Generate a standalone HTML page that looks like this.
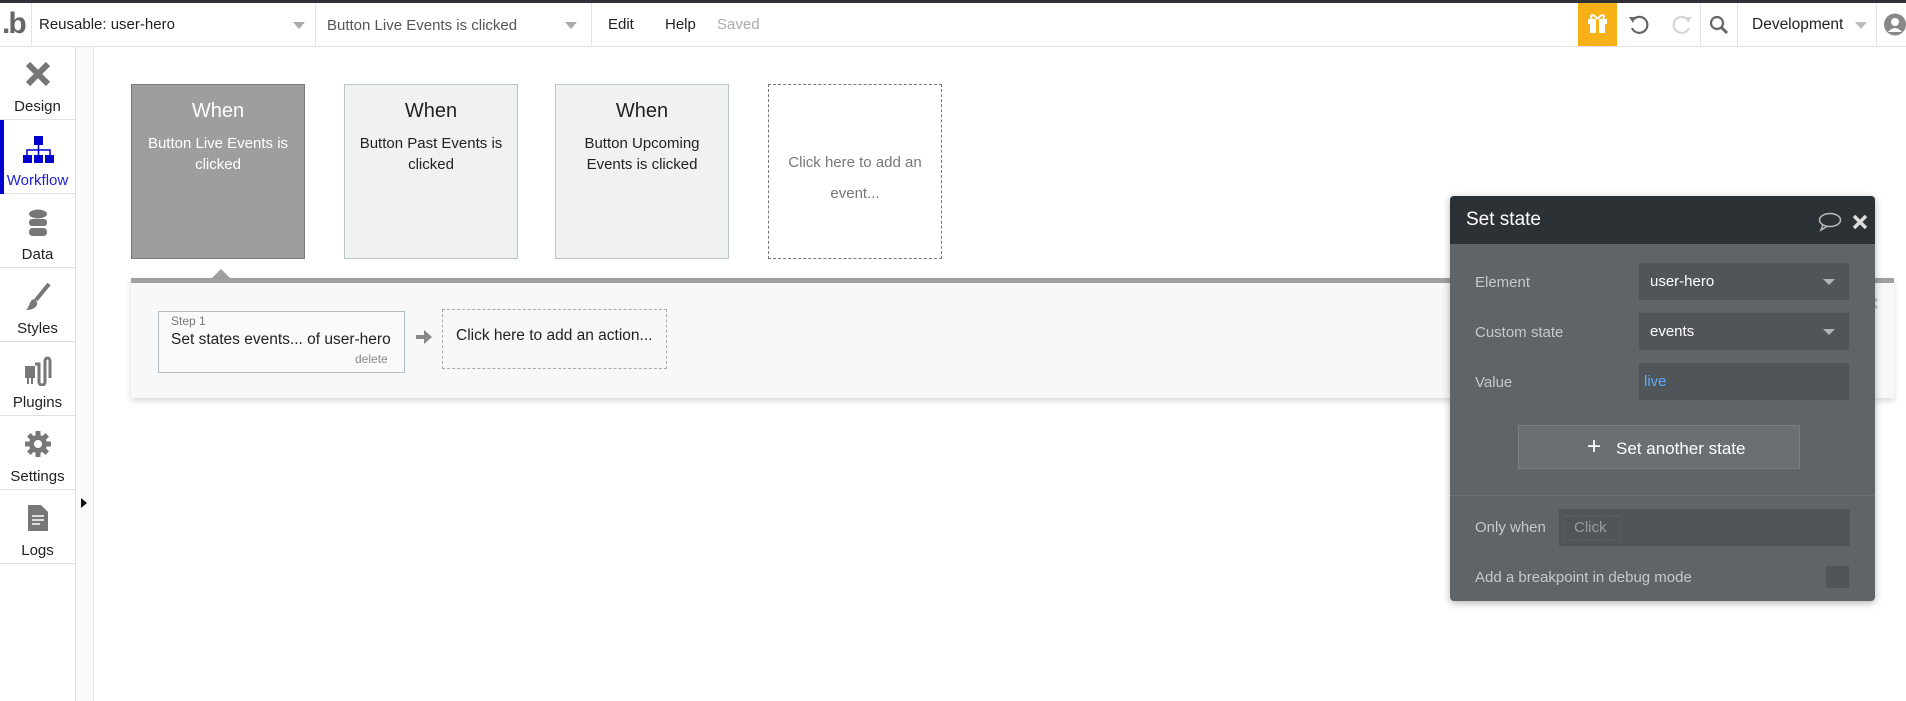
<!DOCTYPE html>
<html><head><meta charset="utf-8"><style>
*{margin:0;padding:0;box-sizing:border-box}
body{width:1906px;height:701px;position:relative;overflow:hidden;background:#fff;font-family:"Liberation Sans",sans-serif;color:#222}
.a{position:absolute}
.t{position:absolute;white-space:nowrap}
.sep{position:absolute;top:3px;width:1px;height:43px;background:#e4e4e4}
.dd{position:absolute;width:0;height:0;border-left:6px solid transparent;border-right:6px solid transparent;border-top:7px solid #aaa}
.side{position:absolute;left:0;width:75px;height:74px;border-bottom:1px solid #e0e0e0;text-align:center}
.side svg{margin-top:2px}
.side .l{position:absolute;left:0;right:0;top:52px;font-size:15px;color:#222}
.card{position:absolute;top:84px;width:174px;height:175px;text-align:center;font-size:15px;line-height:21px}
.card .w{font-size:20px;margin-top:16px;margin-bottom:11px}
.lab{position:absolute;left:1475px;font-size:15px;color:#c5c9cc}
.inp{position:absolute;left:1639px;width:210px;height:37px;background:#50555a;color:#fff;font-size:15px;padding:10px 0 0 11px}
.inp .dd{left:auto;right:14px;top:16px;border-top-color:#b0b4b8;border-left-width:6px;border-right-width:6px;border-top-width:6px}
</style></head><body>
<div class="a" style="left:0;top:0;width:1906px;height:3px;background:#2e3236"></div>
<div class="a" style="left:0;top:46px;width:1906px;height:1px;background:#e2e2e2"></div>
<div class="t" style="left:2px;top:7px;font-size:30px;color:#666;font-weight:bold;letter-spacing:-2px">.b</div>
<div class="sep" style="left:31px"></div>
<div class="t" style="left:39px;top:16px;font-size:15px">Reusable: user-hero</div>
<div class="dd" style="left:293px;top:22px"></div>
<div class="sep" style="left:315px"></div>
<div class="t" style="left:327px;top:17px;font-size:15px;color:#555">Button Live Events is clicked</div>
<div class="dd" style="left:565px;top:22px"></div>
<div class="sep" style="left:591px"></div>
<div class="t" style="left:608px;top:16px;font-size:15px">Edit</div>
<div class="t" style="left:665px;top:16px;font-size:15px">Help</div>
<div class="t" style="left:717px;top:16px;font-size:15px;color:#aaa">Saved</div>
<div class="a" style="left:1578px;top:3px;width:39px;height:43px;background:#f8b017"></div>
<svg class="a" style="left:1585px;top:11px" width="25" height="25" viewBox="0 0 25 25"><rect x="3" y="8" width="19" height="5" fill="#fff"/><rect x="5" y="13" width="15" height="9" fill="#fff"/><rect x="11" y="8" width="3" height="14" fill="#f8b017"/><path d="M12.5 8 C8 2 4 4 7 8 M12.5 8 C17 2 21 4 18 8" stroke="#fff" stroke-width="2" fill="none"/></svg>
<svg class="a" style="left:1628px;top:14px" width="22" height="22" viewBox="0 0 22 22"><path d="M5 6 A8 8 0 1 1 4 14" stroke="#666" stroke-width="2.2" fill="none"/><path d="M1 3 L7 3 L5 9 Z" fill="#666"/></svg>
<svg class="a" style="left:1671px;top:14px" width="22" height="22" viewBox="0 0 22 22"><path d="M17 6 A8 8 0 1 0 18 14" stroke="#d5d5d5" stroke-width="2.2" fill="none"/><path d="M21 3 L15 3 L17 9 Z" fill="#d5d5d5"/></svg>
<div class="sep" style="left:1700px"></div>
<svg class="a" style="left:1708px;top:14px" width="22" height="22" viewBox="0 0 22 22"><circle cx="9" cy="9" r="6" stroke="#666" stroke-width="2.2" fill="none"/><path d="M13 13 L19 19" stroke="#666" stroke-width="3"/></svg>
<div class="sep" style="left:1737px"></div>
<div class="t" style="left:1752px;top:16px;font-size:15.5px">Development</div>
<div class="dd" style="left:1855px;top:22px;border-top-color:#bbb"></div>
<div class="sep" style="left:1876px"></div>
<svg class="a" style="left:1883px;top:13px" width="23" height="23" viewBox="0 0 23 23"><circle cx="12" cy="11.5" r="11" fill="#888"/><circle cx="12" cy="9" r="4" fill="#fff"/><path d="M5 19 Q12 11 19 19" fill="#fff"/></svg>

<div class="a" style="left:75px;top:47px;width:1px;height:654px;background:#e0e0e0"></div>
<div class="a" style="left:76px;top:47px;width:17px;height:654px;background:#fafafa"></div>
<div class="a" style="left:93px;top:47px;width:1px;height:654px;background:#e6e6e6"></div>
<div class="a" style="left:81px;top:498px;width:0;height:0;border-top:5px solid transparent;border-bottom:5px solid transparent;border-left:6px solid #111"></div>

<div class="side" style="top:46px"><svg class="a" style="left:25px;top:12px" width="26" height="28" viewBox="0 0 26 26"><path d="M3 3 L23 23 M23 3 L3 23" stroke="#777" stroke-width="6"/></svg><div class="l">Design</div></div>
<div class="side" style="top:120px"><div class="a" style="left:0;top:0;width:4px;height:74px;background:#0000cc"></div><svg class="a" style="left:23px;top:14px" width="32" height="28" viewBox="0 0 32 28"><rect x="11" y="0" width="9" height="9" fill="#0000cc"/><path d="M15.5 9 V14 M4 19 V14 H27 V19 M15.5 14 V19" stroke="#0000cc" stroke-width="1.5" fill="none"/><rect x="0" y="19" width="9" height="8" fill="#0000cc"/><rect x="11" y="19" width="9" height="8" fill="#0000cc"/><rect x="22" y="19" width="9" height="8" fill="#0000cc"/></svg><div class="l" style="color:#2222dd">Workflow</div></div>
<div class="side" style="top:194px"><svg class="a" style="left:28px;top:13px" width="20" height="28" viewBox="0 0 20 28"><ellipse cx="10" cy="5" rx="9" ry="4.5" fill="#777"/><rect x="1" y="10" width="18" height="7" rx="3" fill="#777"/><rect x="1" y="19" width="18" height="8" rx="3.5" fill="#777"/></svg><div class="l">Data</div></div>
<div class="side" style="top:268px"><svg class="a" style="left:25px;top:13px" width="26" height="28" viewBox="0 0 26 28"><path d="M24 1 L11 17" stroke="#777" stroke-width="4"/><path d="M10 16 C4 16 5 24 1 27 C8 27 13 24 12 19 Z" fill="#777"/></svg><div class="l">Styles</div></div>
<div class="side" style="top:342px"><svg class="a" style="left:23px;top:12px" width="30" height="30" viewBox="0 0 30 30"><rect x="2" y="10" width="10" height="12" fill="#777"/><path d="M5 22 V28 M9 22 V28" stroke="#777" stroke-width="2"/><path d="M12 8 H16 V26 C16 30 22 30 22 26 V5 C22 1 27 1 27 5 V22" stroke="#777" stroke-width="3" fill="none"/></svg><div class="l">Plugins</div></div>
<div class="side" style="top:416px"><svg class="a" style="left:25px;top:13px" width="26" height="26" viewBox="0 0 26 26"><g fill="#777"><circle cx="13" cy="13" r="9"/><rect x="10.5" y="0" width="5" height="26"/><rect x="0" y="10.5" width="26" height="5"/><rect x="10.5" y="0" width="5" height="26" transform="rotate(45 13 13)"/><rect x="10.5" y="0" width="5" height="26" transform="rotate(-45 13 13)"/></g><circle cx="13" cy="13" r="4" fill="#fff"/></svg><div class="l">Settings</div></div>
<div class="side" style="top:490px"><svg class="a" style="left:28px;top:13px" width="20" height="26" viewBox="0 0 20 26"><path d="M0 0 H13 L20 7 V26 H0 Z" fill="#777"/><path d="M4 11 H16 M4 15 H16 M4 19 H12" stroke="#fff" stroke-width="1.5"/></svg><div class="l">Logs</div></div>

<div class="card" style="left:131px;background:#9e9e9e;border:1px solid #7a7a7a;color:#fff"><div class="w">When</div>Button Live Events is<br>clicked</div>
<div class="card" style="left:344px;background:#f0f2f1;border:1px solid #b9c5c9"><div class="w">When</div>Button Past Events is<br>clicked</div>
<div class="card" style="left:555px;background:#f0f2f1;border:1px solid #b9c5c9"><div class="w">When</div>Button Upcoming<br>Events is clicked</div>
<div class="card" style="left:768px;border:1px dashed #777;color:#777;padding-top:62px;line-height:31px">Click here to add an<br>event...</div>

<div class="a" style="left:212px;top:269px;width:0;height:0;border-left:9px solid transparent;border-right:9px solid transparent;border-bottom:9px solid #a0a0a0"></div>
<div class="a" style="left:131px;top:278px;width:1763px;height:120px;background:#f8f8f8;border-top:5px solid #a0a0a0;box-shadow:0 3px 6px rgba(0,0,0,.15)"></div>
<div class="t" style="left:1866px;top:291px;font-size:22px;color:#bbb;font-weight:bold">×</div>
<div class="a" style="left:158px;top:311px;width:247px;height:62px;border:1px solid #b0bcc2;background:#fafafa"></div>
<div class="t" style="left:171px;top:314px;font-size:12px;color:#777">Step 1</div>
<div class="t" style="left:171px;top:331px;font-size:15.5px">Set states events... of user-hero</div>
<div class="t" style="left:355px;top:352px;font-size:12px;color:#888">delete</div>
<svg class="a" style="left:415px;top:329px" width="18" height="16" viewBox="0 0 18 16"><path d="M1 6 H9 V1 L17 8 L9 15 V10 H1 Z" fill="#888"/></svg>
<div class="a" style="left:442px;top:309px;width:225px;height:60px;border:1px dashed #aaa"></div>
<div class="t" style="left:456px;top:327px;font-size:15.5px">Click here to add an action...</div>

<div class="a" style="left:1450px;top:196px;width:425px;height:405px;background:#5f6468;border-radius:4px;box-shadow:0 2px 8px rgba(0,0,0,.3);overflow:hidden">
<div class="a" style="left:0;top:0;width:425px;height:48px;background:#2b3134"></div>
</div>
<div class="t" style="left:1466px;top:209px;font-size:19px;color:#fff">Set state</div>
<svg class="a" style="left:1818px;top:212px" width="24" height="20" viewBox="0 0 24 20"><ellipse cx="12" cy="8" rx="10.5" ry="6.5" stroke="#bbb" stroke-width="1.5" fill="none"/><path d="M5 13 L3 18 L10 14" stroke="#bbb" stroke-width="1.5" fill="none"/></svg>
<svg class="a" style="left:1852px;top:214px" width="16" height="16" viewBox="0 0 16 16"><path d="M2 2 L14 14 M14 2 L2 14" stroke="#ddd" stroke-width="3.5"/></svg>
<div class="lab" style="top:274px">Element</div>
<div class="inp" style="top:263px">user-hero<div class="dd"></div></div>
<div class="lab" style="top:324px">Custom state</div>
<div class="inp" style="top:313px">events<div class="dd"></div></div>
<div class="lab" style="top:374px">Value</div>
<div class="inp" style="top:363px;color:#5fa8ff;padding-left:5px">live</div>
<div class="a" style="left:1518px;top:425px;width:282px;height:44px;background:#6a6f73;border:1px solid #7a7e82"></div>
<div class="t" style="left:1587px;top:435px;font-size:24px;color:#fff;line-height:24px">+</div>
<div class="t" style="left:1616px;top:439px;font-size:17px;color:#fff">Set another state</div>
<div class="a" style="left:1450px;top:495px;width:425px;height:1px;background:#6b7074"></div>
<div class="lab" style="top:519px">Only when</div>
<div class="a" style="left:1559px;top:509px;width:291px;height:37px;background:#50555a"></div>
<div class="a" style="left:1564px;top:515px;width:56px;height:25px;border:1px dashed #5e6368"></div>
<div class="t" style="left:1574px;top:519px;font-size:15px;color:#9a9ea2">Click</div>
<div class="lab" style="top:569px">Add a breakpoint in debug mode</div>
<div class="a" style="left:1826px;top:566px;width:23px;height:22px;background:#50555a"></div>
</body></html>
